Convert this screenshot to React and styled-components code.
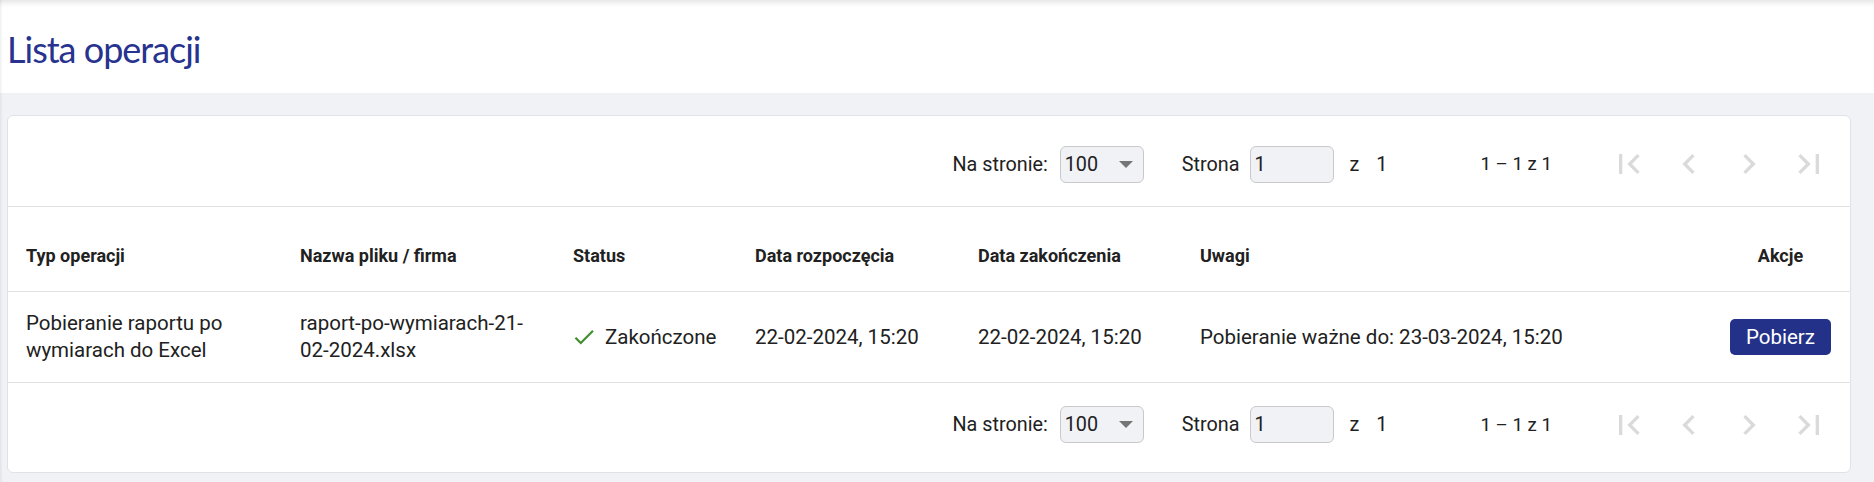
import React from 'react';
import styled, { createGlobalStyle } from 'styled-components';

const GlobalStyle = createGlobalStyle`
  html, body {
    margin: 0;
    padding: 0;
    background: #f1f2f6;
    font-family: Roboto, "Liberation Sans", Arial, sans-serif;
    color: #212121;
  }
  * { box-sizing: border-box; }
`;

const Page = styled.div`
  min-height: 100vh;
  background: #f1f2f6;
  box-shadow: inset 3px 0 3px -2px rgba(0, 0, 0, 0.08);
`;

const TopBar = styled.header`
  height: 93px;
  background: #fff;
  display: flex;
  align-items: center;
  padding: 4px 0 0 7px;
  box-shadow: inset 0 7px 6px -5px rgba(0, 0, 0, 0.13), inset 3px 0 3px -2px rgba(0, 0, 0, 0.08);
`;

const Title = styled.h1`
  margin: 0;
  font-family: Lato, "Open Sans", sans-serif;
  font-weight: 400;
  font-size: 36px;
  letter-spacing: -1px;
  color: #27338e;
`;

const Content = styled.main`
  padding: 22px 23px 9px 7px;
`;

const Card = styled.section`
  background: #fff;
  border: 1px solid #dfe2e7;
  border-radius: 6px;
`;

const Paginator = styled.div`
  height: ${p => (p.$bottom ? '89px' : '91px')};
  display: flex;
  justify-content: flex-end;
  align-items: center;
  padding: ${p => (p.$bottom ? '0 11px 6px 0' : '6px 11px 0 0')};
  border-bottom: ${p => (p.$bottom ? 'none' : '1px solid #e2e2e2')};
  font-size: 19.8px;
`;

const Group = styled.div`
  display: flex;
  align-items: center;
  gap: ${p => p.$gap ?? 0}px;
  margin-left: ${p => p.$space ?? 0}px;
`;

const Label = styled.span`
  color: #212121;
  white-space: nowrap;
`;

const RangeLabel = styled.span`
  font-size: 18.7px;
  color: #212121;
  white-space: nowrap;
`;

const SelectBox = styled.div`
  width: 84px;
  height: 37px;
  border: 1px solid #c9c9cc;
  border-radius: 6px;
  background: #f1f2f6;
  display: flex;
  align-items: center;
  justify-content: space-between;
  padding: 0 10px 0 4px;
  font-size: 19.8px;
`;

const Caret = styled.span`
  width: 0;
  height: 0;
  border-left: 7px solid transparent;
  border-right: 7px solid transparent;
  border-top: 7px solid #757575;
`;

const PageInput = styled.input`
  width: 84px;
  height: 37px;
  border: 1px solid #c9c9cc;
  border-radius: 6px;
  background: #f1f2f6;
  padding: 0 3px;
  font-family: inherit;
  font-size: 19.8px;
  color: #212121;
  outline: none;
`;

const NavButton = styled.button`
  width: 60px;
  height: 48px;
  border: none;
  background: transparent;
  padding: 0;
  display: flex;
  align-items: center;
  justify-content: center;
  color: #dadada;
  cursor: default;
`;

const Row = styled.div`
  display: grid;
  grid-template-columns: 274px 273px 182px 223px 222px 1fr 101px;
  padding: ${p => (p.$head ? '12px 19px 0 18px' : '0 19px 0 18px')};
  height: ${p => (p.$head ? '85px' : '91px')};
  border-bottom: 1px solid #e2e2e2;
  align-items: center;
`;

const HeadCell = styled.div`
  font-weight: 700;
  font-size: 18px;
  color: #212121;
  text-align: ${p => (p.$center ? 'center' : 'left')};
`;

const Cell = styled.div`
  font-size: 20.5px;
  line-height: 27px;
  color: #212121;
  padding-right: ${p => p.$pad ?? 20}px;
  display: flex;
  align-items: center;
  gap: 8px;
  justify-content: ${p => (p.$center ? 'center' : 'flex-start')};
`;

const DownloadButton = styled.button`
  width: 101px;
  height: 36px;
  border: none;
  border-radius: 5px;
  background: #243189;
  color: #fff;
  font-family: inherit;
  font-size: 20.5px;
  cursor: pointer;
`;

const Icon = ({ d, size = 40 }) => (
  <svg width={size} height={size} viewBox="0 0 24 24" fill="currentColor">
    <path d={d} />
  </svg>
);

const icons = {
  first: 'M18.41 16.59L13.82 12l4.59-4.59L17 6l-6 6 6 6zM6 6h2v12H6z',
  prev: 'M15.41 7.41L14 6l-6 6 6 6 1.41-1.41L10.83 12z',
  next: 'M10 6L8.59 7.41 13.17 12l-4.58 4.59L10 18l6-6z',
  last: 'M5.59 7.41L10.18 12l-4.59 4.59L7 18l6-6-6-6zM16 6h2v12h-2z',
};

const Check = () => (
  <svg width="26" height="26" viewBox="0 0 24 24" fill="#3f8f2f" style={{ marginLeft: -2 }}>
    <path d="M9 16.17L4.83 12l-1.42 1.41L9 19 21 7l-1.41-1.41z" />
  </svg>
);

function Pager({ bottom }) {
  return (
    <Paginator $bottom={bottom}>
      <Group $gap={12}>
        <Label>Na stronie:</Label>
        <SelectBox>
          <span>100</span>
          <Caret />
        </SelectBox>
      </Group>
      <Group $space={38}>
        <Label>Strona</Label>
        <Group $space={11}>
          <PageInput value="1" readOnly />
        </Group>
        <Group $space={15}>
          <Label>z</Label>
        </Group>
        <Group $space={17}>
          <Label>1</Label>
        </Group>
      </Group>
      <Group $space={93}>
        <RangeLabel>1 – 1 z 1</RangeLabel>
      </Group>
      <Group $space={47}>
        <NavButton disabled><Icon d={icons.first} /></NavButton>
        <NavButton disabled><Icon d={icons.prev} /></NavButton>
        <NavButton disabled><Icon d={icons.next} /></NavButton>
        <NavButton disabled><Icon d={icons.last} /></NavButton>
      </Group>
    </Paginator>
  );
}

const operations = [
  {
    type: 'Pobieranie raportu po wymiarach do Excel',
    file: 'raport-po-wymiarach-21-02-2024.xlsx',
    status: 'Zakończone',
    start: '22-02-2024, 15:20',
    end: '22-02-2024, 15:20',
    note: 'Pobieranie ważne do: 23-03-2024, 15:20',
  },
];

export default function App() {
  return (
    <Page>
      <GlobalStyle />
      <TopBar>
        <Title>Lista operacji</Title>
      </TopBar>
      <Content>
        <Card>
          <Pager />
          <Row $head>
            <HeadCell>Typ operacji</HeadCell>
            <HeadCell>Nazwa pliku / firma</HeadCell>
            <HeadCell>Status</HeadCell>
            <HeadCell>Data rozpoczęcia</HeadCell>
            <HeadCell>Data zakończenia</HeadCell>
            <HeadCell>Uwagi</HeadCell>
            <HeadCell $center>Akcje</HeadCell>
          </Row>
          {operations.map((op, i) => (
            <Row key={i}>
              <Cell>{op.type}</Cell>
              <Cell $pad={24}>{op.file}</Cell>
              <Cell><Check />{op.status}</Cell>
              <Cell>{op.start}</Cell>
              <Cell>{op.end}</Cell>
              <Cell>{op.note}</Cell>
              <Cell $pad={0} $center>
                <DownloadButton>Pobierz</DownloadButton>
              </Cell>
            </Row>
          ))}
          <Pager bottom />
        </Card>
      </Content>
    </Page>
  );
}
